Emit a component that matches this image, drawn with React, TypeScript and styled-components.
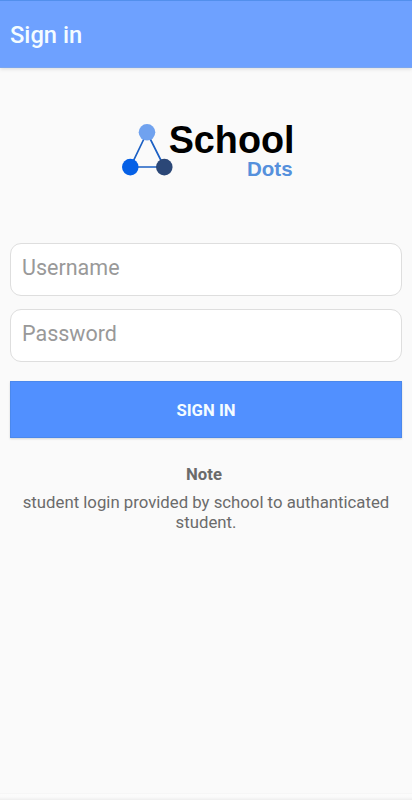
import React from "react";
import styled, { createGlobalStyle } from "styled-components";

const GlobalStyle = createGlobalStyle`
  * { box-sizing: border-box; }
  body { margin: 0; background: #fafafa; font-family: Roboto, sans-serif; }
`;

const Screen = styled.div`
  height: 800px;
  display: flex;
  flex-direction: column;
  background: #fafafa;
  overflow: hidden;
`;

const AppBar = styled.header`
  flex: none;
  height: 68px;
  padding: 2px 10px 0;
  display: flex;
  align-items: center;
  background: #6ea1ff;
  border-top: 1px solid #528fec;
  border-bottom: 1px solid #7ba6ef;
  box-shadow: 0 1px 4px rgba(0, 0, 0, 0.13);
`;

const Title = styled.h1`
  margin: 0;
  font-size: 23.7px;
  line-height: 28px;
  font-weight: 500;
  color: #f4fcff;
`;

const Content = styled.main`
  flex: 1;
  display: flex;
  flex-direction: column;
  padding: 50px 10px 0;
`;

const Logo = styled.svg`
  display: block;
  width: 180px;
  height: 64px;
  margin: 0 0 61px 108px;
  font-family: "Liberation Sans", Arial, sans-serif;
  font-weight: 700;
`;

const Field = styled.input`
  width: 392px;
  height: 53px;
  margin: 0 0 13px;
  padding: 0 11px 5px;
  border: 1px solid #dedede;
  border-radius: 11px;
  outline: none;
  background: #fff;
  font: 400 21.5px Roboto, sans-serif;
  color: #333;
  &::placeholder { color: #999; opacity: 1; }
`;

const SignInButton = styled.button`
  width: 392px;
  height: 57px;
  margin: 6px 0 0;
  padding: 2px 0 0;
  border: 1px solid #4b88ec;
  background: #5190ff;
  box-shadow: 0 1px 2px rgba(0, 0, 0, 0.15);
  font: 700 16.7px Roboto, sans-serif;
  color: #f4fcff;
`;

const NoteTitle = styled.h2`
  margin: 27px 4px 0 0;
  text-align: center;
  font-size: 16.7px;
  line-height: 20px;
  font-weight: 700;
  color: #6b6b6b;
`;

const NoteText = styled.p`
  margin: 8px 0 0;
  text-align: center;
  font-size: 16.75px;
  line-height: 19.5px;
  color: #6b6b6b;
`;

const BottomEdge = styled.div`
  flex: none;
  height: 7px;
  border-top: 1px solid #f6f6f6;
  background: linear-gradient(#fcfcfc, #fafafa 50%, #eeeeee);
`;

function SchoolDotsLogo() {
  return (
    <Logo viewBox="118 118 180 64" aria-label="School Dots">
      <path d="M147 132.5 130.5 167h33.8z" fill="none" stroke="#1c60c4" strokeWidth="1.7" />
      <circle cx="147" cy="132.3" r="8.3" fill="#70a2ef" />
      <circle cx="130.3" cy="167.1" r="8.3" fill="#0560e6" />
      <circle cx="164.3" cy="167.1" r="8.3" fill="#2b4777" />
      <text x="168.7" y="153.2" fontSize="38.6" textLength="125.8" lengthAdjust="spacingAndGlyphs" fill="#000">School</text>
      <text x="247" y="175.8" fontSize="20.8" textLength="45.6" lengthAdjust="spacingAndGlyphs" fill="#5590dc">Dots</text>
    </Logo>
  );
}

export default function App() {
  return (
    <>
      <GlobalStyle />
      <Screen>
        <AppBar>
          <Title>Sign in</Title>
        </AppBar>
        <Content>
          <SchoolDotsLogo />
          <Field type="text" placeholder="Username" />
          <Field type="password" placeholder="Password" />
          <SignInButton type="button">SIGN IN</SignInButton>
          <NoteTitle>Note</NoteTitle>
          <NoteText>student login provided by school to authanticated student.</NoteText>
        </Content>
        <BottomEdge />
      </Screen>
    </>
  );
}
